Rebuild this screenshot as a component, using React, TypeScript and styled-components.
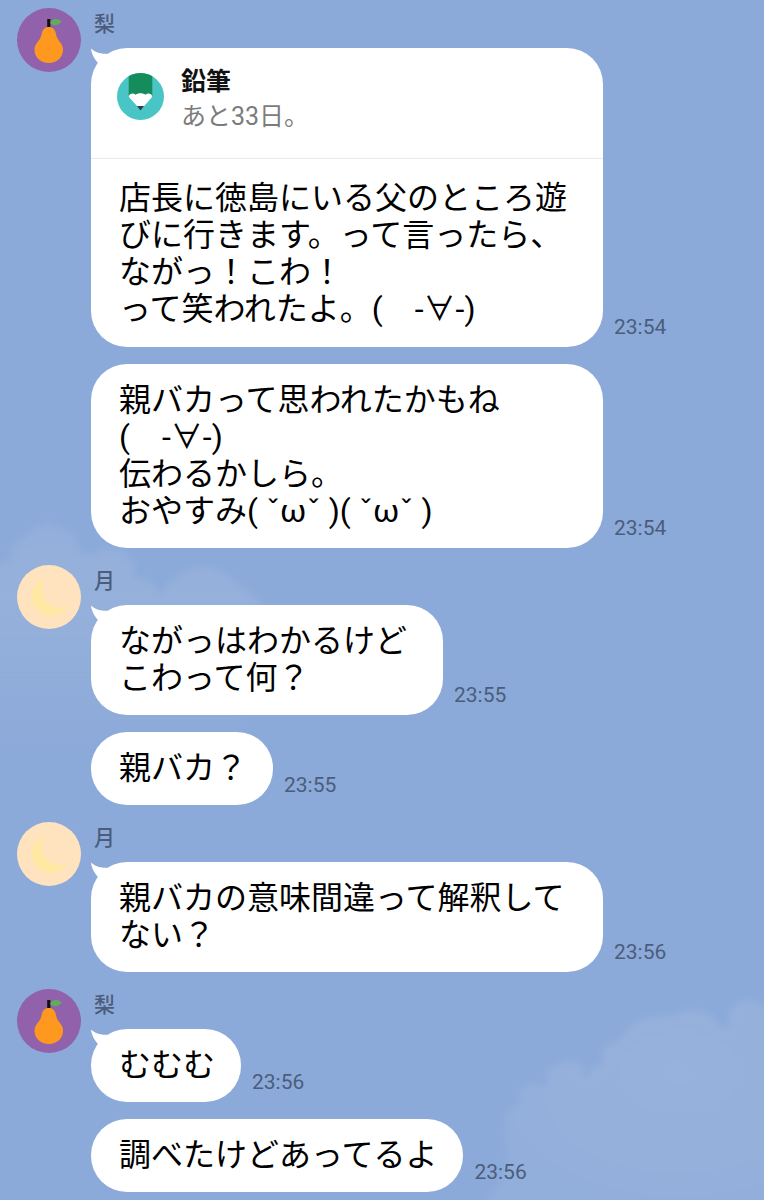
import React from "react";
import styled, { createGlobalStyle } from "styled-components";

const GlobalStyle = createGlobalStyle`
  *, *::before, *::after { box-sizing: border-box; }
  body {
    margin: 0;
    background: #8caad9;
    font-family: Roboto, "Noto Sans CJK JP", sans-serif;
  }
  p, h2 { margin: 0; }
`;

const Screen = styled.main`
  position: relative;
  min-height: 100vh;
  padding: 8px 17px;
  overflow: hidden;
  background: #8caad9;
`;

const Sky = styled.div`
  position: absolute;
  inset: 0;
  pointer-events: none;
`;

const LeftCloud = styled.svg`
  position: absolute;
  left: 0;
  top: 510px;
`;

const RightCloud = styled.svg`
  position: absolute;
  right: 0;
  top: 970px;
`;

const Chat = styled.div`
  position: relative;
  display: flex;
  flex-direction: column;
  gap: 17px;
`;

const Group = styled.section`
  display: flex;
  align-items: flex-start;
  gap: 10px;
`;

const Avatar = styled.svg`
  flex: none;
  width: 64px;
  height: 64px;
`;

const Messages = styled.div`
  flex: 1;
  min-width: 0;
  display: flex;
  flex-direction: column;
`;

const Sender = styled.h2`
  height: 40px;
  padding-left: 3px;
  color: #4b5d7b;
  font-size: 21px;
  font-weight: 500;
  line-height: 32px;
`;

const Rows = styled.div`
  display: flex;
  flex-direction: column;
  gap: 17px;
`;

const Row = styled.div`
  display: flex;
  align-items: flex-end;
  gap: 11px;
`;

const Bubble = styled.article<{ $wide?: boolean }>`
  position: relative;
  max-width: 512px;
  ${({ $wide }) => $wide && "flex: 0 1 512px;"}
  border-radius: 36px;
  background: #fff;
`;

const Tail = styled.svg`
  position: absolute;
  left: 0;
  top: 0;
  width: 26px;
  height: 36px;
`;

const BubbleText = styled.p<{ $quoted?: boolean; $loose?: boolean }>`
  padding: ${({ $quoted }) => ($quoted ? "21px" : "18px")} ${({ $loose }) => ($loose ? "36px" : "26px")}
    ${({ $quoted }) => ($quoted ? "19px" : "18px")} 28px;
  color: #000;
  font-size: 32px;
  line-height: 37px;
  white-space: pre-line;
`;

const Time = styled.time`
  flex: none;
  padding-bottom: 7px;
  color: #4b5d7b;
  font-size: 21px;
  line-height: 26px;
`;

const Quote = styled.header`
  display: flex;
  align-items: flex-start;
  gap: 17px;
  height: 111px;
  padding: 16px 26px 0;
  border-bottom: 1px solid #ebebeb;
`;

const QuoteIcon = styled.svg`
  flex: none;
  width: 47px;
  height: 47px;
  margin-top: 9px;
`;

const QuoteTitle = styled.p`
  color: #111;
  font-size: 25px;
  font-weight: 700;
  line-height: 35px;
`;

const QuoteText = styled.p`
  color: #7c7c7c;
  font-size: 25px;
  line-height: 35px;
`;

function PearAvatar() {
  return (
    <Avatar viewBox="0 0 64 64" role="img" aria-label="梨">
      <circle cx="32" cy="32" r="32" fill="#9161ab" />
      <path d="M30.2 11h3.2v9h-3.2z" fill="#111" />
      <path d="M33 14.8c2.2-4.600 8.600-4.900 11.700-1.200-2.900 4.300-8.900 4.900-11.700 1.200z" fill="#5eae58" />
      <path
        d="M31.800 19c-4 0-6.200 2.600-7 6.200-.8 4.600-2.300 6.300-4.300 8.900-2 2.700-3 4.600-3 7.400C17.500 49.500 23.700 55 31.800 55S46 49.500 46 41.500c0-2.800-1-4.700-3-7.400-2-2.600-3.400-4.300-4.200-8.900-.8-3.600-3-6.200-7-6.200z"
        fill="#ff981f"
      />
    </Avatar>
  );
}

function MoonAvatar() {
  return (
    <Avatar viewBox="0 0 64 64" role="img" aria-label="月">
      <circle cx="32" cy="32" r="32" fill="#ffe3bf" />
      <path
        d="M27 14C19 17.500 15 24 15 31.500 15 42 23.500 50.500 34 50.500c7.400 0 13.400-3.400 16-9.500-3 1.400-5 1.800-7.600 1.800C32.500 42.800 25 35 25 25c0-4.200.8-7.600 2-11z"
        fill="#ffe8a1"
      />
    </Avatar>
  );
}

function PencilIcon() {
  return (
    <QuoteIcon viewBox="0 0 47 47" role="img" aria-label="鉛筆">
      <defs>
        <clipPath id="pencil-disc">
          <circle cx="23.500" cy="23.500" r="23.500" />
        </clipPath>
      </defs>
      <g clipPath="url(#pencil-disc)">
        <path d="M0 0h47v47H0z" fill="#49c5c6" />
        <path d="M11.700 0h23.600v24H11.700z" fill="#158c5b" />
        <path
          d="M11.700 23.800c.6-3.600 4.600-4.200 7-2 2-2 7.600-2 9.600 0 2.400-2.200 6.400-1.600 7 2L27 33.200h-6.800z"
          fill="#fff"
        />
        <path d="M20 33h7L23.500 37.400z" fill="#2f3e4e" />
      </g>
    </QuoteIcon>
  );
}

function BubbleTail() {
  return (
    <Tail viewBox="0 0 26 36" aria-hidden="true">
      <path d="M0 .5C3 3.800 9 6 15.800 5.700L24 12 12 26 6.600 14.600C3 10.500.3 5 0 .5z" fill="#fff" />
    </Tail>
  );
}

type Message = { text: string; time: string; wide?: boolean; loose?: boolean; quote?: { title: string; text: string } };
type GroupData = { sender: string; avatar: () => React.ReactElement; messages: Message[] };

const groups: GroupData[] = [
  {
    sender: "梨",
    avatar: PearAvatar,
    messages: [
      {
        quote: { title: "鉛筆", text: "あと33日。" },
        text: "店長に徳島にいる父のところ遊びに行きます。って言ったら、\nながっ！こわ！\nって笑われたよ。(　-∀-)",
        time: "23:54",
        wide: true,
      },
      {
        text: "親バカって思われたかもね\n(　-∀-)\n伝わるかしら。\nおやすみ( ˇωˇ )( ˇωˇ )",
        time: "23:54",
        wide: true,
      },
    ],
  },
  {
    sender: "月",
    avatar: MoonAvatar,
    messages: [
      { text: "ながっはわかるけど\nこわって何？", time: "23:55", loose: true },
      { text: "親バカ？", time: "23:55" },
    ],
  },
  {
    sender: "月",
    avatar: MoonAvatar,
    messages: [{ text: "親バカの意味間違って解釈して\nない？", time: "23:56", wide: true }],
  },
  {
    sender: "梨",
    avatar: PearAvatar,
    messages: [
      { text: "むむむ", time: "23:56" },
      { text: "調べたけどあってるよ", time: "23:56" },
    ],
  },
];

export default function App() {
  return (
    <>
      <GlobalStyle />
      <Screen>
        <Sky aria-hidden="true">
          <LeftCloud width="460" height="260" viewBox="0 0 460 260">
            <defs>
              <linearGradient id="left-fade" x1="0" y1="0" x2="0" y2="1">
                <stop offset="0" stopColor="#93afdb" />
                <stop offset="0.35" stopColor="#95b0db" />
                <stop offset="1" stopColor="#95b0db" stopOpacity="0" />
              </linearGradient>
              <filter id="cloud-soft" x="-10%" y="-10%" width="120%" height="120%">
                <feGaussianBlur stdDeviation="3" />
              </filter>
            </defs>
            <path
              filter="url(#cloud-soft)"
              fill="url(#left-fade)"
              d="M-20 60L0 53 10 50 14 34 24 28 33 19 46 13 60 17 74 24 80 42 92 44 104 38 122 40 133 52 134 68 150 70 160 84 170 72 188 60 206 56 224 62 236 74 250 82 262 95 268 120 230 240-20 240z"
            />
          </LeftCloud>
          <RightCloud width="280" height="230" viewBox="0 0 280 230">
            <defs>
              <radialGradient id="right-glow" cx="0.65" cy="0.35" r="0.7">
                <stop offset="0" stopColor="#97b2dc" />
                <stop offset="1" stopColor="#92aedb" />
              </radialGradient>
            </defs>
            <path
              filter="url(#cloud-soft)"
              fill="url(#right-glow)"
              d="M0 240L24 195 20 160 22 142 34 136 36 120 46 114 62 116 64 100 76 93 90 91 98 95 100 112 106 100 118 94 120 78 138 68 146 56 164 48 186 46 206 40 226 44 236 56 244 60 246 40 258 29 272 32 300 42 300 240z"
            />
          </RightCloud>
        </Sky>
        <Chat>
          {groups.map(({ sender, avatar: AvatarImage, messages }, g) => (
            <Group key={g}>
              <AvatarImage />
              <Messages>
                <Sender>{sender}</Sender>
                <Rows>
                  {messages.map((m, i) => (
                    <Row key={i}>
                      <Bubble $wide={m.wide}>
                        {i === 0 && <BubbleTail />}
                        {m.quote && (
                          <Quote>
                            <PencilIcon />
                            <div>
                              <QuoteTitle>{m.quote.title}</QuoteTitle>
                              <QuoteText>{m.quote.text}</QuoteText>
                            </div>
                          </Quote>
                        )}
                        <BubbleText $quoted={!!m.quote} $loose={m.loose}>
                          {m.text}
                        </BubbleText>
                      </Bubble>
                      <Time>{m.time}</Time>
                    </Row>
                  ))}
                </Rows>
              </Messages>
            </Group>
          ))}
        </Chat>
      </Screen>
    </>
  );
}
